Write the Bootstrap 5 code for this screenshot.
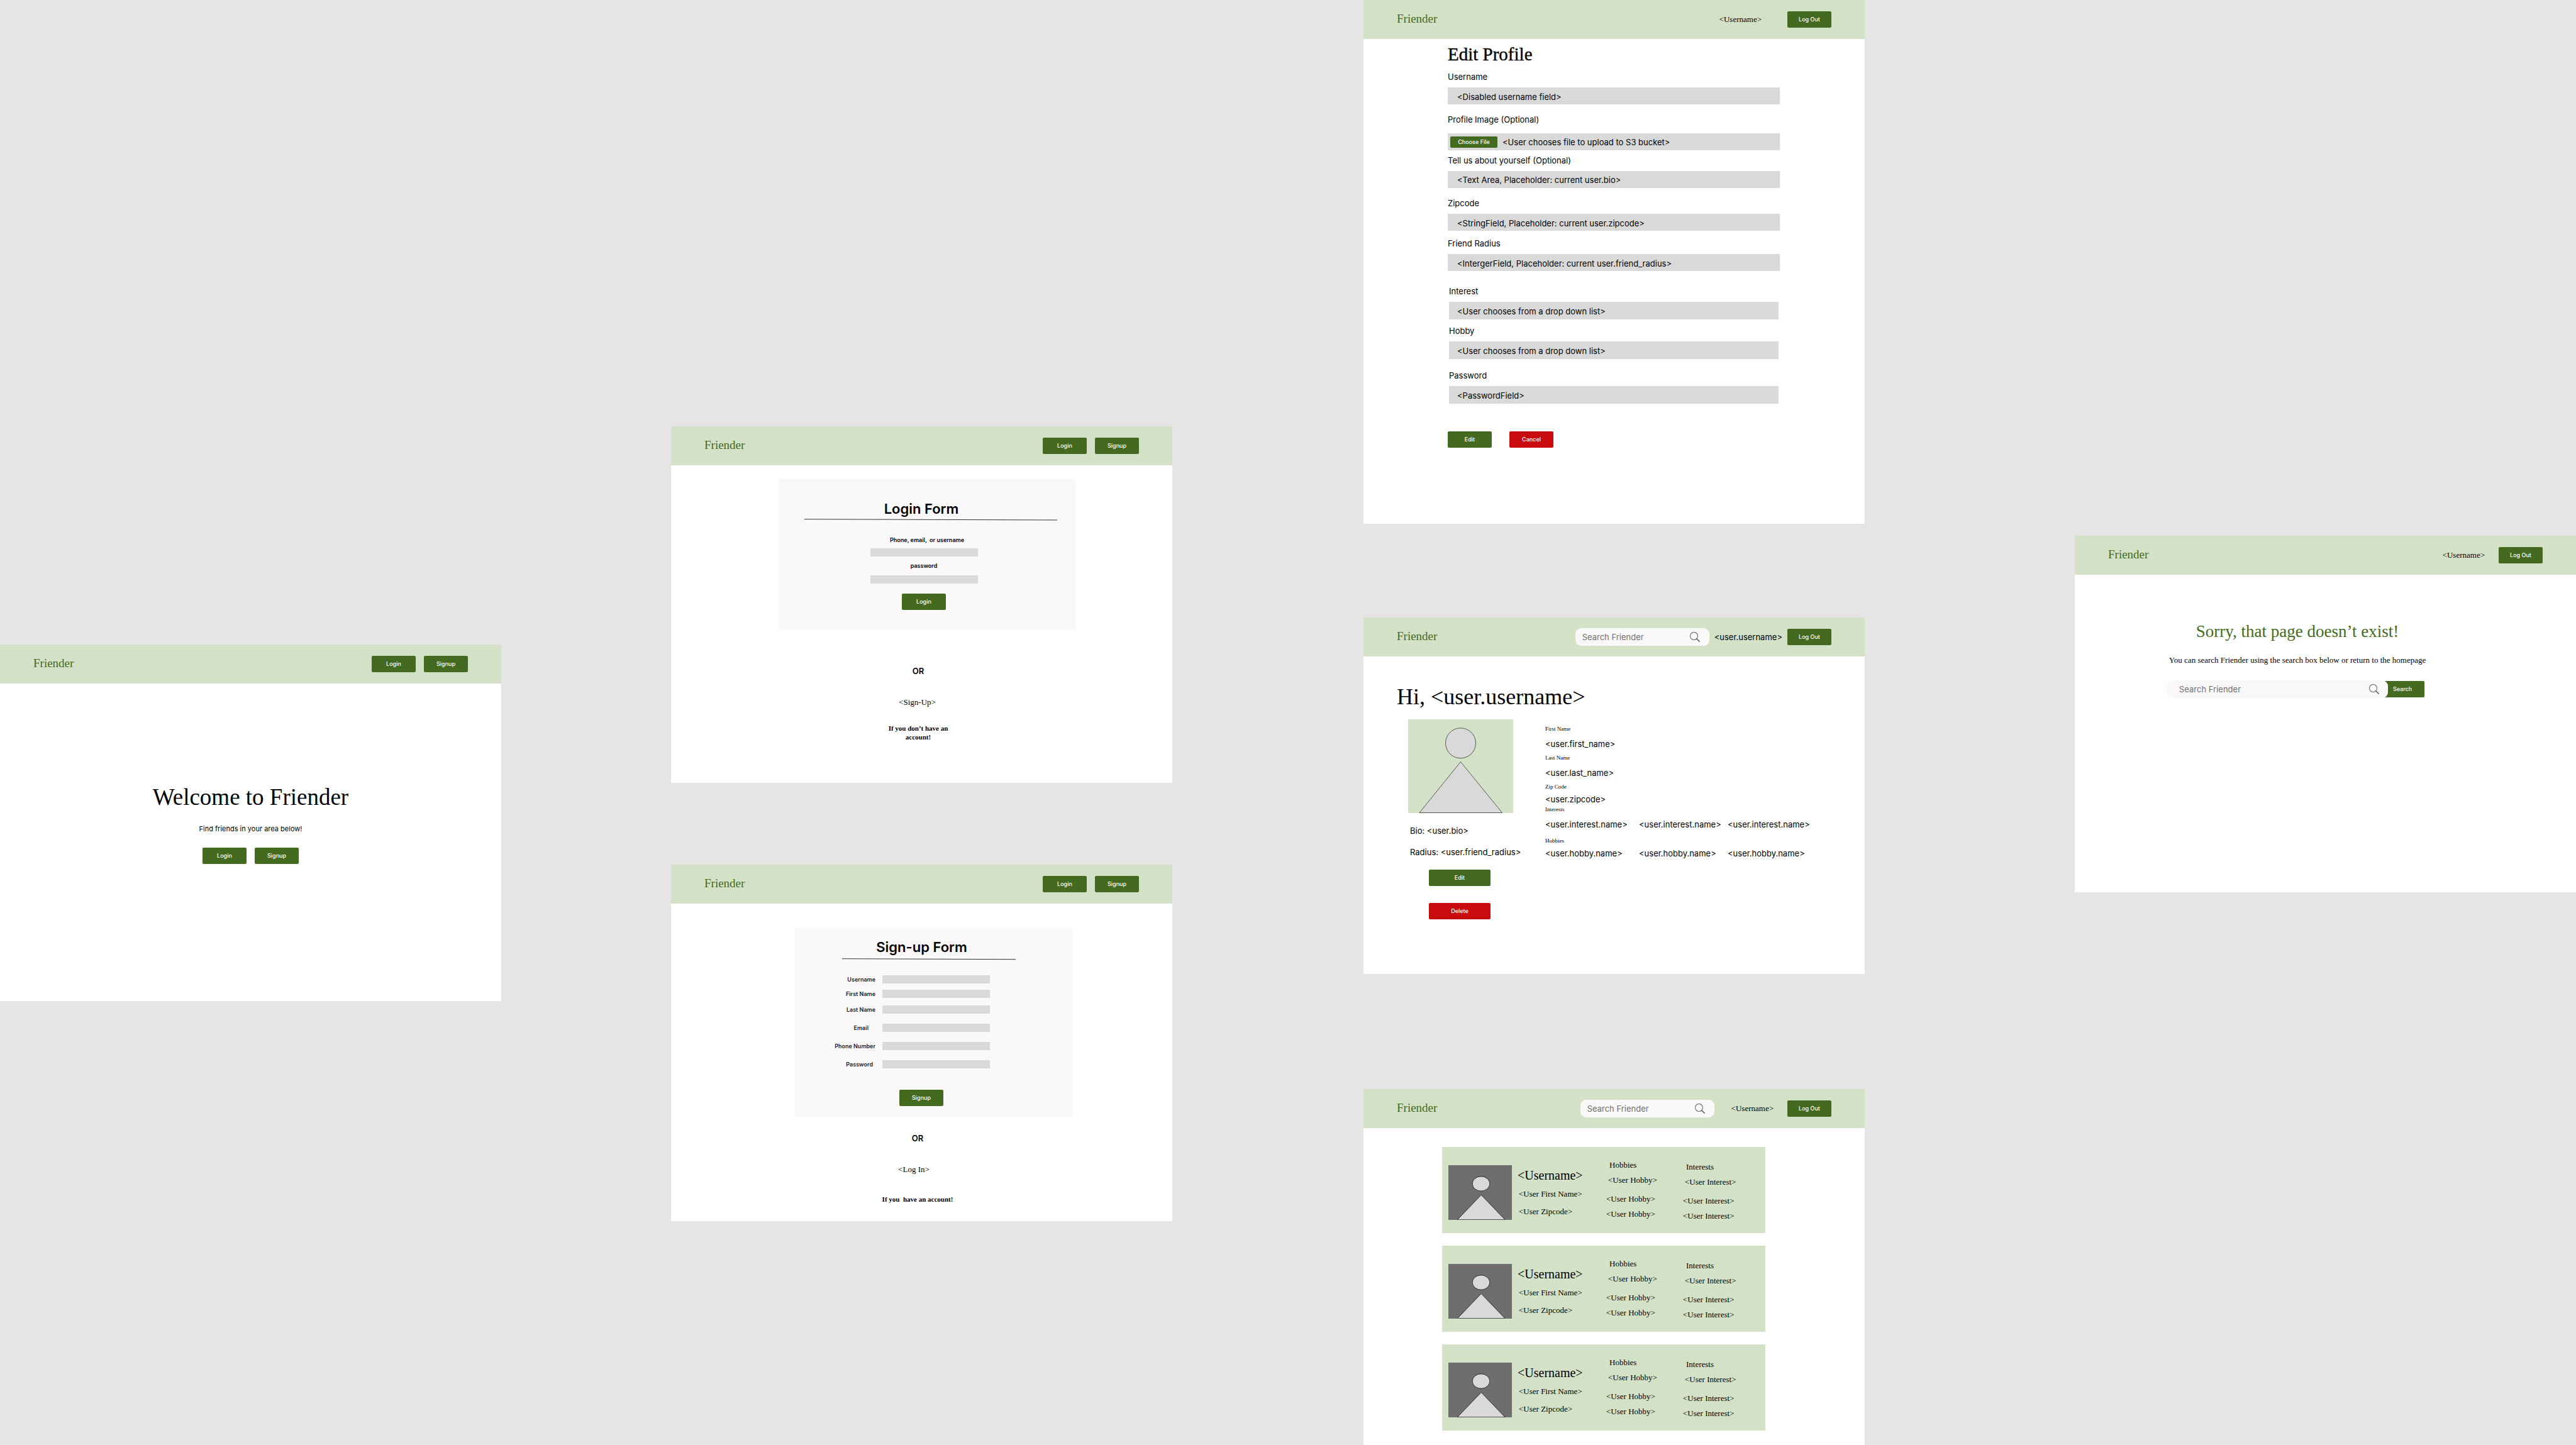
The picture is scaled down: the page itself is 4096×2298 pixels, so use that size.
<!DOCTYPE html>
<html lang="en">
<head>
<meta charset="utf-8">
<meta name="viewport" content="width=device-width, initial-scale=1">
<title>Friender wireframes</title>
<link href="https://cdn.jsdelivr.net/npm/bootstrap@5.3.0/dist/css/bootstrap.min.css" rel="stylesheet">
<style>
:root{--leaf:#446a20;--mist:#d3e1c7;--field:#d9d9d9;--panel:#faf8f9;--danger:#c80b0e;--serif:"Liberation Serif",serif}
body{background:#e5e5e5;color:#000;font-family:Inter,sans-serif;font-size:13px;line-height:20px}

/* board: four columns of artboards */
.board{display:grid;grid-template-columns:797fr 270fr 797fr 304fr 797fr 334fr 797fr;align-items:start}
.lane-1{grid-column:1;padding-top:1025px}
.lane-2{grid-column:3;padding-top:678px;gap:130px}
.lane-3{grid-column:5}
.lane-4{grid-column:7;padding-top:852px}
.artboard{background:#fff;min-height:567px}
.artboard.tall{min-height:833px}
.gap-above{margin-top:149px}
.gap-above-lg{margin-top:183px}

/* shared parts */
.topbar{background:var(--mist);height:62px;padding:0 53px}
.topbar .navbar-brand{font:19px/24px var(--serif);color:var(--leaf);margin:0 auto 0 0;padding:0 0 2px}
.serif{font-family:var(--serif)}
.btn-row{display:flex;gap:13px}
.btn-leaf,.btn-red{--bs-btn-color:#fff;--bs-btn-hover-color:#fff;--bs-btn-bg:var(--leaf);--bs-btn-hover-bg:#37581a;border:0;border-radius:2px;width:70px;height:26px;padding:0;font-size:9px;line-height:26px;font-weight:500;flex:none}
.btn-red{--bs-btn-bg:var(--danger);--bs-btn-hover-bg:#a8090c}
.btn-wide{width:98px}
.btn-file{width:75px;height:18px;line-height:18px}
.user{color:#000;text-decoration:none}
.user-far{margin-right:41px}
.user-mid{margin-right:22px}
.user-near{margin:0 8px}
.searchbox{background:var(--panel);border-radius:9px;width:213px;height:28px;padding:0 15px 0 11px}
.searchbox input{border:0;background:none;outline:0;padding:0;min-width:0;flex:1;color:#6f6f6f}
.searchbox input::placeholder{color:#6f6f6f;opacity:1}
.searchbox.wide{width:352px;padding:0 14px 0 20px;position:relative;z-index:1}
.searchbox.spaced{margin-right:27px}
.display-l{font:37px/48px var(--serif)}
.display-m{font:36px/48px var(--serif);padding:40px 0 0 53px}
.display-s{font:27px/36px var(--serif);color:var(--leaf)}
.tiny{font-size:9px;line-height:14px;font-weight:600}
.mt4{margin-top:4px}.mt6{margin-top:6px}.mt8{margin-top:8px}.mt10{margin-top:10px}.mt12{margin-top:12px}.mt14{margin-top:14px}.mt16{margin-top:16px}.mt18{margin-top:18px}.mt20{margin-top:20px}.mt22{margin-top:22px}

/* welcome */
.welcome{padding-top:157px}
.tagline{font-size:11px;margin-bottom:0}

/* login and sign-up */
.panel{background:var(--panel)}
.login-panel{margin:22px 0 0 171px;width:472px;height:240px;padding-top:33px}
.signup-panel{margin:38px 0 0 197px;width:441px;height:301px;padding-top:17px}
.form-title{font-size:22px;line-height:28px;font-weight:600;margin:0}
.login-panel .form-title{padding-right:18px}
.signup-panel .form-title{padding-right:38px}
.login-rule{margin:2px 0 24px 41px}
.signup-rule{margin:4px 0 24px 75px}
.login-fields{padding-right:10px}
.keep{white-space:pre}
.bar{display:block;width:171px;height:13px;background:var(--field);border:0;border-radius:0;padding:0 4px;font-size:9px}
.pair{display:flex;align-items:center}
.pair label{width:139px;padding-right:11px;text-align:right;color:#1c1b1f;line-height:13px}
.pair label.email{padding-right:22px}
.pair label.pass{padding-right:15px}
.signup-btn{margin:34px 0 0 166px}
.other{padding:55px 11px 0 0}
.other-signup{padding:24px 13px 0 0}
.other p{margin:0}
.other .link-line{margin-top:30px;padding-right:3px}
.other-signup .link-line{padding-right:12px}
.other .hint{font-size:11px;line-height:14px;margin-top:24px}
.other-signup .hint{margin-top:30px}

/* edit profile */
.heading-edit{font:29px/36px var(--serif);-webkit-text-stroke:.4px #000}
.edit-form{margin-left:134px;width:528px;padding-top:6px}
.edit-form .cap{display:block;margin-bottom:7px}
.edit-form .cap-loose{margin-bottom:12px}
.fieldbox{display:block;width:100%;height:27px;background:var(--field);border:0;border-radius:0;padding:2px 15px 0;color:#000;font-size:13px;line-height:24px;resize:none;appearance:none;overflow:hidden}
.fieldbox::placeholder{color:#000;opacity:1}
.filebox{padding:0 4px;gap:8px}
.inset{padding:0 2px}
.inset .fieldbox{height:28px;padding:2px 13px 0}
.edit-actions{display:flex;gap:28px;margin-top:44px}

/* profile */
.profile-body{padding:12px 0 0 71px}
.profile-side{width:218px}
.facts{padding:18px 0 0 3px}
.side-actions{gap:27px;padding:18px 0 0 33px}
.profile{padding-top:9px}
.profile dd{margin-bottom:0}
.note{font:9px/12px var(--serif)}
.traits{display:grid;grid-template-columns:149px 141px auto}

/* people list */
.people{display:flex;flex-direction:column;gap:20px;padding:30px 0 0 125px}
.person{display:flex;background:var(--mist);width:514px;height:137px;padding:0 10px;font-family:var(--serif)}
.person svg{margin-top:29px;flex:none}
.who{width:150px;padding:33px 0 0 9px;flex:none}
.who h3{font:20px/24px var(--serif);margin:0}
.who div{padding-left:2px}
.listcol{list-style:none;margin:0;padding:19px 0 0;width:122px;flex:none}
.listcol.low{padding-top:22px}
.listcol .in-5{padding-left:5px}
.listcol .in-3{padding-left:3px}

/* missing page */
.missing{padding:72px 0 0 146px}
.missing-text{width:416px}
.search-go{margin-left:-12px}
</style>
</head>
<body>
<svg class="d-none">
  <symbol id="lens" viewBox="0 0 16 16"><circle cx="6.5" cy="6.5" r="6" fill="none" stroke="#6f6f6f" stroke-width="1.1"/><path d="M10.800 10.800 15.200 15.200" stroke="#6f6f6f" stroke-width="1.8" stroke-linecap="round"/></symbol>
  <symbol id="face" viewBox="0 0 101 87"><rect width="101" height="87" fill="#6e6e6e"/><ellipse cx="52" cy="29.500" rx="13.800" ry="11.600" fill="#d9d9d9" stroke="#000" stroke-width=".7"/><path d="M52.200 47.300 90 86.700H14.500z" fill="#d9d9d9" stroke="#000" stroke-width=".7"/></symbol>
</svg>
<main class="board">

<div class="lane-1">
  <section class="artboard">
    <nav class="topbar d-flex align-items-center"><a class="navbar-brand" href="#">Friender</a><div class="btn-row"><button class="btn btn-leaf">Login</button><button class="btn btn-leaf">Signup</button></div></nav>
    <div class="welcome text-center">
      <h1 class="display-l m-0">Welcome to Friender</h1>
      <p class="tagline mt16">Find friends in your area below!</p>
      <div class="btn-row justify-content-center mt20"><button class="btn btn-leaf">Login</button><button class="btn btn-leaf">Signup</button></div>
    </div>
  </section>
</div>

<div class="lane-2 d-flex flex-column">
  <section class="artboard">
    <nav class="topbar d-flex align-items-center"><a class="navbar-brand" href="#">Friender</a><div class="btn-row"><button class="btn btn-leaf">Login</button><button class="btn btn-leaf">Signup</button></div></nav>
    <form class="panel login-panel text-center d-flex flex-column">
      <h2 class="form-title">Login Form</h2>
      <svg class="login-rule" width="402" height="3"><path d="M0 .7 402 2" stroke="#000" stroke-width=".8"/></svg>
      <label class="tiny keep" for="li-id">Phone, email,  or username</label>
      <div class="login-fields d-flex flex-column align-items-center">
        <input class="bar mt6" id="li-id">
        <label class="tiny mt8" for="li-pw">password</label>
        <input class="bar mt8" id="li-pw" type="password">
        <button type="button" class="btn btn-leaf mt16">Login</button>
      </div>
    </form>
    <div class="other text-center">
      <p class="fw-semibold">OR</p>
      <p class="link-line serif"><a class="user" href="#">&lt;Sign-Up&gt;</a></p>
      <p class="hint serif fw-bold">If you don’t have an<br>account!</p>
    </div>
  </section>

  <section class="artboard">
    <nav class="topbar d-flex align-items-center"><a class="navbar-brand" href="#">Friender</a><div class="btn-row"><button class="btn btn-leaf">Login</button><button class="btn btn-leaf">Signup</button></div></nav>
    <form class="panel signup-panel">
      <h2 class="form-title text-center">Sign-up Form</h2>
      <svg class="signup-rule d-block" width="276" height="3"><path d="M0 .7 276 1.700" stroke="#000" stroke-width=".8"/></svg>
      <div class="pair"><label class="tiny" for="su1">Username</label><input class="bar" id="su1"></div>
      <div class="pair mt10"><label class="tiny" for="su2">First Name</label><input class="bar" id="su2"></div>
      <div class="pair mt12"><label class="tiny" for="su3">Last Name</label><input class="bar" id="su3"></div>
      <div class="pair mt16"><label class="tiny email" for="su4">Email</label><input class="bar" id="su4"></div>
      <div class="pair mt16"><label class="tiny" for="su5">Phone Number</label><input class="bar" id="su5"></div>
      <div class="pair mt16"><label class="tiny pass" for="su6">Password</label><input class="bar" id="su6" type="password"></div>
      <button type="button" class="btn btn-leaf signup-btn d-block">Signup</button>
    </form>
    <div class="other other-signup text-center">
      <p class="fw-semibold">OR</p>
      <p class="link-line serif"><a class="user" href="#">&lt;Log In&gt;</a></p>
      <p class="hint serif fw-bold keep">If you  have an account!</p>
    </div>
  </section>
</div>

<div class="lane-3 d-flex flex-column">
  <section class="artboard tall">
    <nav class="topbar d-flex align-items-center"><a class="navbar-brand" href="#">Friender</a><a class="user user-far serif" href="#">&lt;Username&gt;</a><button class="btn btn-leaf">Log Out</button></nav>
    <form class="edit-form">
      <h2 class="heading-edit m-0">Edit Profile</h2>
      <label class="cap mt8" for="e1">Username</label><input class="fieldbox" id="e1" disabled value="&lt;Disabled username field&gt;">
      <label class="cap cap-loose mt14" for="e2">Profile Image (Optional)</label>
      <div class="fieldbox filebox d-flex align-items-center"><label class="btn btn-leaf btn-file" for="e2">Choose File</label><input class="d-none" type="file" id="e2"><span>&lt;User chooses file to upload to S3 bucket&gt;</span></div>
      <label class="cap mt6" for="e3">Tell us about yourself (Optional)</label><textarea class="fieldbox" id="e3" rows="1" placeholder="&lt;Text Area, Placeholder: current user.bio&gt;"></textarea>
      <label class="cap mt14" for="e4">Zipcode</label><input class="fieldbox" id="e4" placeholder="&lt;StringField, Placeholder: current user.zipcode&gt;">
      <label class="cap mt10" for="e5">Friend Radius</label><input class="fieldbox" id="e5" placeholder="&lt;IntergerField, Placeholder: current user.friend_radius&gt;">
      <div class="inset">
        <label class="cap mt22" for="e6">Interest</label><select class="fieldbox" id="e6"><option>&lt;User chooses from a drop down list&gt;</option></select>
        <label class="cap mt8" for="e7">Hobby</label><select class="fieldbox" id="e7"><option>&lt;User chooses from a drop down list&gt;</option></select>
        <label class="cap mt16" for="e8">Password</label><input class="fieldbox" id="e8" type="password" placeholder="&lt;PasswordField&gt;">
      </div>
      <div class="edit-actions"><button type="button" class="btn btn-leaf">Edit</button><button type="button" class="btn btn-red">Cancel</button></div>
    </form>
  </section>

  <section class="artboard gap-above">
    <nav class="topbar d-flex align-items-center"><a class="navbar-brand" href="#">Friender</a>
      <div class="searchbox d-flex align-items-center"><input type="search" aria-label="Search Friender" placeholder="Search Friender"><svg width="16" height="16"><use href="#lens"/></svg></div>
      <a class="user user-near" href="#">&lt;user.username&gt;</a><button class="btn btn-leaf">Log Out</button></nav>
    <h1 class="display-m m-0">Hi, &lt;user.username&gt;</h1>
    <div class="profile-body d-flex">
      <div class="profile-side">
        <svg class="d-block" width="167" height="149"><rect width="167" height="149" fill="#d3e1c7"/><circle cx="83.500" cy="37.800" r="24" fill="#d9d9d9" stroke="#000" stroke-width=".6"/><path d="M83.500 67.500 149.500 148.500H18z" fill="#d9d9d9" stroke="#000" stroke-width=".6"/></svg>
        <div class="facts text-nowrap"><div>Bio: &lt;user.bio&gt;</div><div class="mt14">Radius: &lt;user.friend_radius&gt;</div></div>
        <div class="side-actions d-flex flex-column"><button class="btn btn-leaf btn-wide">Edit</button><button class="btn btn-red btn-wide">Delete</button></div>
      </div>
      <dl class="profile m-0 text-nowrap">
        <dt class="note">First Name</dt><dd class="mt8">&lt;user.first_name&gt;</dd>
        <dt class="note mt6">Last Name</dt><dd class="mt8">&lt;user.last_name&gt;</dd>
        <dt class="note mt6">Zip Code</dt><dd class="mt4">&lt;user.zipcode&gt;</dd>
        <dt class="note">Interests</dt><dd class="traits mt8"><span>&lt;user.interest.name&gt;</span><span>&lt;user.interest.name&gt;</span><span>&lt;user.interest.name&gt;</span></dd>
        <dt class="note mt10">Hobbies</dt><dd class="traits mt4"><span>&lt;user.hobby.name&gt;</span><span>&lt;user.hobby.name&gt;</span><span>&lt;user.hobby.name&gt;</span></dd>
      </dl>
    </div>
  </section>

  <section class="artboard gap-above-lg">
    <nav class="topbar d-flex align-items-center"><a class="navbar-brand" href="#">Friender</a>
      <div class="searchbox spaced d-flex align-items-center"><input type="search" aria-label="Search Friender" placeholder="Search Friender"><svg width="16" height="16"><use href="#lens"/></svg></div>
      <a class="user user-mid serif" href="#">&lt;Username&gt;</a><button class="btn btn-leaf">Log Out</button></nav>
    <div class="people">
      <article class="person">
        <svg width="101" height="87"><use href="#face"/></svg>
        <div class="who"><h3>&lt;Username&gt;</h3><div class="mt8">&lt;User First Name&gt;</div><div class="mt8">&lt;User Zipcode&gt;</div></div>
        <ul class="listcol"><li class="in-5">Hobbies</li><li class="in-3 mt4">&lt;User Hobby&gt;</li><li class="mt10">&lt;User Hobby&gt;</li><li class="mt4">&lt;User Hobby&gt;</li></ul>
        <ul class="listcol low"><li class="in-5">Interests</li><li class="in-3 mt4">&lt;User Interest&gt;</li><li class="mt10">&lt;User Interest&gt;</li><li class="mt4">&lt;User Interest&gt;</li></ul>
      </article>
      <article class="person">
        <svg width="101" height="87"><use href="#face"/></svg>
        <div class="who"><h3>&lt;Username&gt;</h3><div class="mt8">&lt;User First Name&gt;</div><div class="mt8">&lt;User Zipcode&gt;</div></div>
        <ul class="listcol"><li class="in-5">Hobbies</li><li class="in-3 mt4">&lt;User Hobby&gt;</li><li class="mt10">&lt;User Hobby&gt;</li><li class="mt4">&lt;User Hobby&gt;</li></ul>
        <ul class="listcol low"><li class="in-5">Interests</li><li class="in-3 mt4">&lt;User Interest&gt;</li><li class="mt10">&lt;User Interest&gt;</li><li class="mt4">&lt;User Interest&gt;</li></ul>
      </article>
      <article class="person">
        <svg width="101" height="87"><use href="#face"/></svg>
        <div class="who"><h3>&lt;Username&gt;</h3><div class="mt8">&lt;User First Name&gt;</div><div class="mt8">&lt;User Zipcode&gt;</div></div>
        <ul class="listcol"><li class="in-5">Hobbies</li><li class="in-3 mt4">&lt;User Hobby&gt;</li><li class="mt10">&lt;User Hobby&gt;</li><li class="mt4">&lt;User Hobby&gt;</li></ul>
        <ul class="listcol low"><li class="in-5">Interests</li><li class="in-3 mt4">&lt;User Interest&gt;</li><li class="mt10">&lt;User Interest&gt;</li><li class="mt4">&lt;User Interest&gt;</li></ul>
      </article>
    </div>
  </section>
</div>

<div class="lane-4">
  <section class="artboard">
    <nav class="topbar d-flex align-items-center"><a class="navbar-brand" href="#">Friender</a><a class="user user-mid serif" href="#">&lt;Username&gt;</a><button class="btn btn-leaf">Log Out</button></nav>
    <div class="missing">
      <div class="missing-text text-center text-nowrap">
        <h1 class="display-s m-0">Sorry, that page doesn’t exist!</h1>
        <p class="serif mt18 mb-0">You can search Friender using the search box below or return to the homepage</p>
      </div>
      <form class="d-flex align-items-center mt22">
        <div class="searchbox wide d-flex align-items-center"><input type="search" aria-label="Search Friender" placeholder="Search Friender"><svg width="16" height="16"><use href="#lens"/></svg></div>
        <button type="button" class="btn btn-leaf search-go">Search</button>
      </form>
    </div>
  </section>
</div>

</main>
<script src="https://cdn.jsdelivr.net/npm/bootstrap@5.3.0/dist/js/bootstrap.bundle.min.js"></script>
</body>
</html>
